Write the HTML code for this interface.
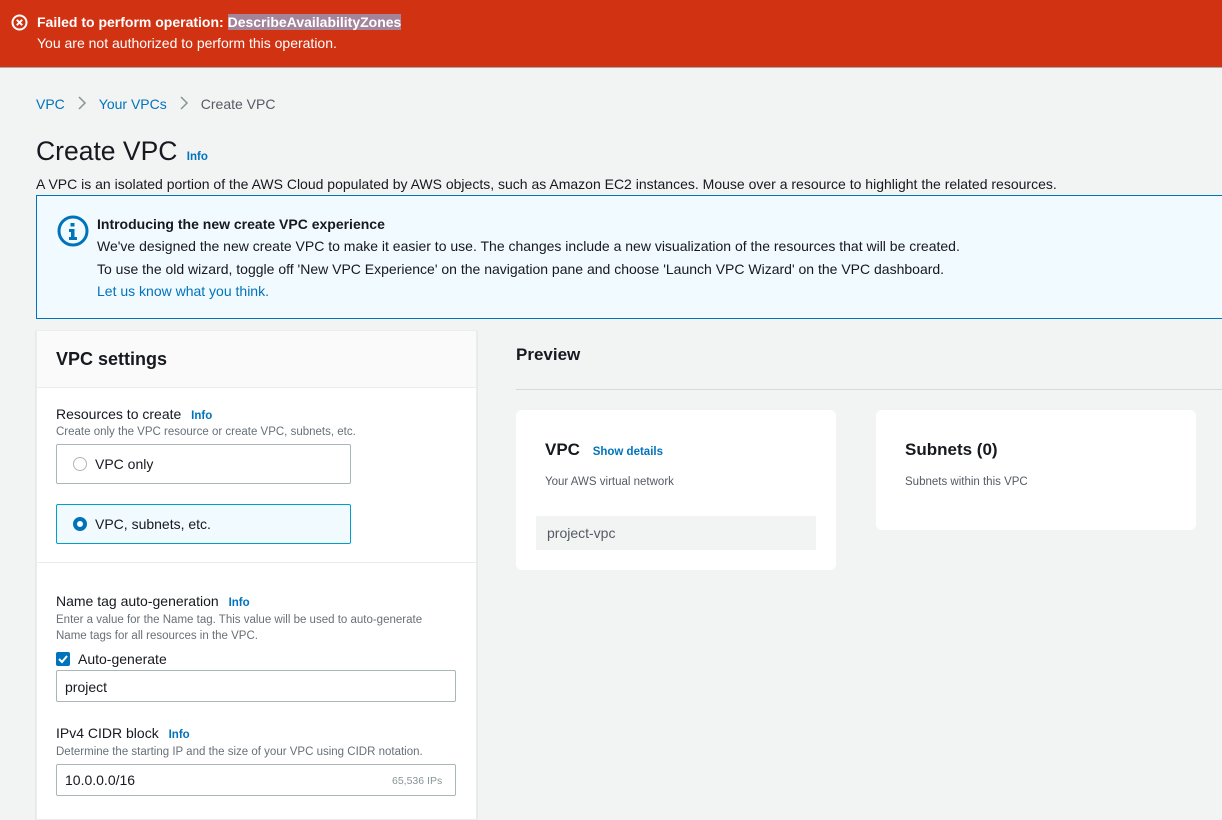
<!DOCTYPE html>
<html><head><meta charset="utf-8"><style>
*{margin:0;padding:0;box-sizing:border-box}
body{width:1222px;height:807px;overflow:hidden;background:#f2f3f3;font-family:"Liberation Sans",sans-serif;color:#16191f;position:relative;font-size:14px}
.a{position:absolute;white-space:nowrap}
.link{color:#0073bb}
.info{color:#0073bb;font-weight:bold;font-size:11.5px}
.desc{color:#687078;font-size:11.5px}
.chev{display:inline-block;vertical-align:-1px;margin:0 12px}
</style></head><body>
<div class="a" style="left:0;top:0;width:1222px;height:68px;background:#d13212;border-bottom:1px solid #a9a9a9"></div>
<svg class="a" style="left:11px;top:14px" width="17" height="17" viewBox="0 0 17 17"><circle cx="8.5" cy="8.5" r="7" fill="none" stroke="#fff" stroke-width="2"/><path d="M5.8 5.8L11.2 11.2M11.2 5.8L5.8 11.2" stroke="#fff" stroke-width="2"/></svg>
<div class="a" style="left:37px;top:14px;color:#fff;font-weight:bold;font-size:14px">Failed to perform operation: <span style="background:#a4849a">DescribeAvailabilityZones</span></div>
<div class="a" style="left:37px;top:35px;color:#fff;font-size:14px">You are not authorized to perform this operation.</div>

<div class="a" style="left:36px;top:96px;font-size:14px"><span class="link">VPC</span><svg class="chev" width="10" height="14"><path d="M2 1l6 6-6 6" stroke="#879596" stroke-width="1.5" fill="none"/></svg><span class="link">Your VPCs</span><svg class="chev" width="10" height="14"><path d="M2 1l6 6-6 6" stroke="#879596" stroke-width="1.5" fill="none"/></svg><span style="color:#545b64">Create VPC</span></div>
<div class="a" style="left:36px;top:136px;font-size:26.5px">Create VPC <span class="info" style="font-size:11.5px;margin-left:2px">Info</span></div>
<div class="a" style="left:36px;top:176px;font-size:14px">A VPC is an isolated portion of the AWS Cloud populated by AWS objects, such as Amazon EC2 instances. Mouse over a resource to highlight the related resources.</div>

<div class="a" style="left:36px;top:195px;width:1200px;height:124px;background:#f1faff;border:1px solid #0073bb"></div>
<svg class="a" style="left:57px;top:215px" width="32" height="32" viewBox="0 0 32 32"><circle cx="16" cy="16" r="14" fill="none" stroke="#0073bb" stroke-width="3"/><rect x="13.5" y="8" width="4" height="3.5" fill="#0073bb"/><path d="M12 14h5.5v8h2.5v3h-8v-3h2v-5h-2z" fill="#0073bb"/></svg>
<div class="a" style="left:97px;top:216px;font-weight:bold;font-size:14px">Introducing the new create VPC experience</div>
<div class="a" style="left:97px;top:238px;font-size:14px">We've designed the new create VPC to make it easier to use. The changes include a new visualization of the resources that will be created.</div>
<div class="a" style="left:97px;top:261px;font-size:14px">To use the old wizard, toggle off 'New VPC Experience' on the navigation pane and choose 'Launch VPC Wizard' on the VPC dashboard.</div>
<div class="a link" style="left:97px;top:283px;font-size:14px">Let us know what you think.</div>

<div class="a" style="left:36px;top:330px;width:441px;height:490px;background:#fff;border:1px solid #eaeded;box-shadow:0 1px 1px rgba(0,28,36,.2)"></div>
<div class="a" style="left:37px;top:331px;width:439px;height:57px;background:#fafafa;border-bottom:1px solid #eaeded"></div>
<div class="a" style="left:56px;top:349px;font-size:18px;font-weight:bold">VPC settings</div>
<div class="a" style="left:56px;top:406px;font-size:14px">Resources to create <span class="info" style="margin-left:6px">Info</span></div>
<div class="a desc" style="left:56px;top:426px">Create only the VPC resource or create VPC, subnets, etc.</div>
<div class="a" style="left:56px;top:444px;width:295px;height:40px;border:1px solid #aab7b8;border-radius:2px"></div>
<div class="a" style="left:73px;top:457px;width:14px;height:14px;border:1px solid #aab7b8;border-radius:50%"></div>
<div class="a" style="left:95px;top:456px;font-size:14px">VPC only</div>
<div class="a" style="left:56px;top:504px;width:295px;height:40px;border:1px solid #00a1c9;background:#f1faff;border-radius:2px"></div>
<div class="a" style="left:73px;top:517px;width:14px;height:14px;border:4px solid #0073bb;border-radius:50%;background:#fff"></div>
<div class="a" style="left:95px;top:516px;font-size:14px">VPC, subnets, etc.</div>
<div class="a" style="left:37px;top:562px;width:439px;height:1px;background:#eaeded"></div>

<div class="a" style="left:56px;top:593px;font-size:14px">Name tag auto-generation <span class="info" style="margin-left:6px">Info</span></div>
<div class="a desc" style="left:56px;top:614px">Enter a value for the Name tag. This value will be used to auto-generate</div>
<div class="a desc" style="left:56px;top:630px">Name tags for all resources in the VPC.</div>
<div class="a" style="left:56px;top:652px;width:14px;height:14px;background:#0073bb;border-radius:2px"></div>
<svg class="a" style="left:56px;top:652px" width="14" height="14"><path d="M3 7l3 3 5-6" stroke="#fff" stroke-width="2" fill="none"/></svg>
<div class="a" style="left:78px;top:651px;font-size:14px">Auto-generate</div>
<div class="a" style="left:56px;top:670px;width:400px;height:32px;border:1px solid #aab7b8;border-radius:2px"></div>
<div class="a" style="left:65px;top:679px;font-size:14px">project</div>
<div class="a" style="left:56px;top:725px;font-size:14px">IPv4 CIDR block <span class="info" style="margin-left:6px">Info</span></div>
<div class="a desc" style="left:56px;top:746px">Determine the starting IP and the size of your VPC using CIDR notation.</div>
<div class="a" style="left:56px;top:764px;width:400px;height:32px;border:1px solid #aab7b8;border-radius:2px"></div>
<div class="a" style="left:65px;top:772px;font-size:14px">10.0.0.0/16</div>
<div class="a" style="left:392px;top:775px;font-size:10.5px;color:#879596">65,536 IPs</div>

<div class="a" style="left:516px;top:345px;font-size:17px;font-weight:bold">Preview</div>
<div class="a" style="left:516px;top:389px;width:706px;height:1px;background:#d5dbdb"></div>
<div class="a" style="left:516px;top:410px;width:320px;height:160px;background:#fff;border-radius:6px"></div>
<div class="a" style="left:545px;top:440px;font-size:17px;font-weight:bold">VPC <span class="info" style="margin-left:8px">Show details</span></div>
<div class="a" style="left:545px;top:476px;font-size:11.5px;color:#545b64">Your AWS virtual network</div>
<div class="a" style="left:536px;top:516px;width:280px;height:34px;background:#f2f3f3"></div>
<div class="a" style="left:547px;top:525px;font-size:14px;color:#545b64">project-vpc</div>
<div class="a" style="left:876px;top:410px;width:320px;height:120px;background:#fff;border-radius:6px"></div>
<div class="a" style="left:905px;top:440px;font-size:17px;font-weight:bold">Subnets (0)</div>
<div class="a" style="left:905px;top:476px;font-size:11.5px;color:#545b64">Subnets within this VPC</div>
</body></html>
